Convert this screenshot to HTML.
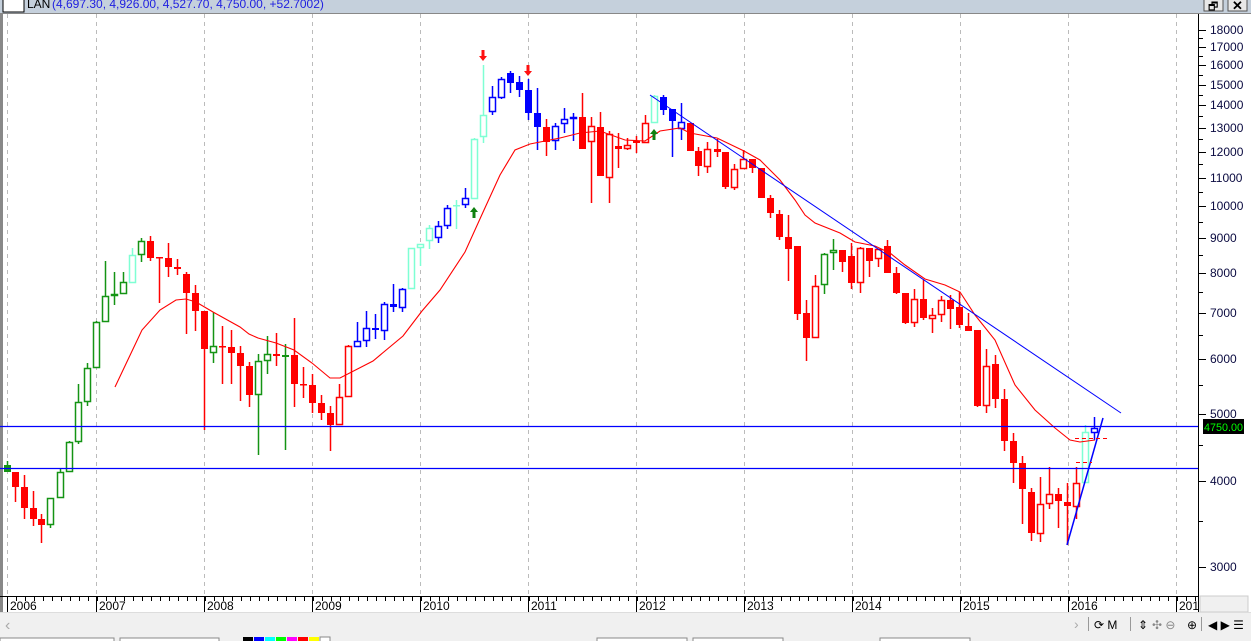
<!DOCTYPE html>
<html><head><meta charset="utf-8"><style>
html,body{margin:0;padding:0;width:1251px;height:641px;overflow:hidden;background:#fff;font-family:"Liberation Sans",sans-serif}
svg{display:block}
</style></head><body>
<svg id="s" width="1251" height="641" xmlns="http://www.w3.org/2000/svg" font-family="Liberation Sans, sans-serif">
<rect x="0" y="0" width="1251" height="641" fill="#fff"/>
<rect x="0" y="0" width="1251" height="13" fill="#c5d0dc"/>
<line x1="0" y1="13.5" x2="1251" y2="13.5" stroke="#888"/>
<rect x="3" y="-4" width="21" height="16" fill="#fff" stroke="#000"/>
<text x="27" y="8" font-size="12" fill="#000">LAN</text>
<text x="52" y="8" font-size="12" fill="#2020e0">(4,697.30, 4,926.00, 4,527.70, 4,750.00, +52.7002)</text>
<rect x="1204" y="-3" width="19" height="14" fill="#e8e8e8" stroke="#555"/>
<text x="1208" y="10" font-size="11" fill="#000">🗗</text>
<rect x="1228" y="-3" width="19" height="14" fill="#e8e8e8" stroke="#555"/>
<text x="1232" y="10" font-size="13" font-weight="bold" fill="#000">✕</text>
<rect x="0" y="14" width="3" height="600" fill="#888"/>
<g id="g"></g>
<rect x="1198" y="14" width="53" height="598" fill="#fff"/>
<line x1="1198.5" y1="14" x2="1198.5" y2="612" stroke="#000"/>
<g id="ax"></g>
<rect x="1203" y="419" width="41" height="15" fill="#000"/>
<text x="1204" y="431" font-size="11" fill="#00ff00" textLength="39" lengthAdjust="spacingAndGlyphs">4750.00</text>
<line x1="0" y1="596.5" x2="1198" y2="596.5" stroke="#000"/>
<g id="dx"></g>
<rect x="1200" y="596" width="48" height="16" fill="#f0f0f0" stroke="#ccc"/>
<rect x="0" y="613" width="1251" height="28" fill="#f0f0f0"/>
<line x1="0" y1="612.5" x2="1251" y2="612.5" stroke="#ddd"/>
<text x="5" y="630" font-size="16" fill="#aaa">‹</text>
<text x="1074" y="629" font-size="14" fill="#aaa">›</text>
<text x="1094" y="629" font-size="12" fill="#000">⟳  M</text>
<text x="1138" y="629" font-size="12" fill="#000">⇕</text>
<text x="1152" y="629" font-size="12" fill="#888">✣ ⊖</text>
<text x="1187" y="629" font-size="12" fill="#000">⊕</text>
<text x="1208" y="629" font-size="12" fill="#000">◀ ▶ ☰</text>
<line x1="1088.5" y1="617" x2="1088.5" y2="631" stroke="#999"/>
<line x1="1130.5" y1="617" x2="1130.5" y2="631" stroke="#999"/>
<line x1="1201.5" y1="617" x2="1201.5" y2="631" stroke="#999"/>
<rect x="0" y="638" width="114" height="5" fill="#fff" stroke="#888"/>
<rect x="120" y="638" width="99" height="5" fill="#fff" stroke="#888"/>
<rect x="243" y="637" width="10" height="5" fill="#000"/><rect x="254" y="637" width="10" height="5" fill="#00f"/><rect x="265" y="637" width="10" height="5" fill="#0ff"/><rect x="276" y="637" width="10" height="5" fill="#0f0"/><rect x="287" y="637" width="10" height="5" fill="#f0f"/><rect x="298" y="637" width="10" height="5" fill="#f00"/><rect x="309" y="637" width="10" height="5" fill="#ff0"/><rect x="320" y="637" width="10" height="5" fill="#fff" stroke="#888"/>
<rect x="597" y="638" width="90" height="5" fill="#fff" stroke="#888"/>
<rect x="693" y="638" width="90" height="5" fill="#fff" stroke="#888"/>
<rect x="880" y="638" width="90" height="5" fill="#fff" stroke="#888"/>
</svg>
<script>
var NS="http://www.w3.org/2000/svg",g=document.getElementById("g");
function el(t,a,p){var e=document.createElementNS(NS,t);for(var k in a)e.setAttribute(k,a[k]);(p||g).appendChild(e);return e;}
[7,96,204,312,420,528,636,744,852,960,1068,1176].forEach(function(x){el("line",{x1:x+.5,y1:14,x2:x+.5,y2:596,stroke:"#bbb","stroke-dasharray":"4,4"});});
var C={r:"#ff0000",g:"#149414",b:"#0000ff",a:"#7fffd4"};
var d=[
[7,465,472,461,472,'g',1],[15,472,487,472,502,'r',1],[24,487,508,475,519,'r',1],[33,508,519,491,526,'r',1],[41,519,525,514,543,'r',1],
[50,498,525,498,528,'g',0],[60,472,498,468,498,'g',0],[69,442,472,441,472,'g',0],[78,402,442,384,444,'g',0],[87,368,402,363,406,'g',0],
[96,322,368,321,368,'g',0],[105,296,322,261,322,'g',0],[114,294,296,272,305,'g',0],[123,282,294,272,294,'g',0],[132,255,283,248,283,'a',0],
[141,241,255,238,262,'g',0],[150,241,258,236,261,'r',1],[159,257,258,257,303,'r',1],[168,258,267,243,277,'r',1],[177,267,269,259,275,'r',1],
[186,274,293,272,334,'r',1],[195,293,311,285,331,'r',1],[204,311,349,311,430,'r',1],[213,346,353,312,363,'g',0],[222,346,347,326,384,'r',1],
[231,347,353,330,384,'r',1],[240,353,366,346,401,'r',1],[249,366,395,362,407,'r',1],[258,361,395,354,455,'g',0],[267,354,361,336,374,'g',0],
[276,354,356,333,366,'r',1],[285,355,357,344,450,'g',1],[294,355,384,318,407,'r',1],[303,384,385,367,398,'r',1],[312,385,403,374,413,'r',1],
[321,403,413,395,420,'r',1],[330,413,425,406,451,'r',1],[339,397,425,384,425,'r',0],[348,346,397,345,397,'r',0],[357,341,347,322,347,'b',0],
[366,328,341,311,347,'b',0],[375,328,330,314,339,'b',1],[384,304,331,302,340,'b',0],[393,304,307,284,312,'b',1],[402,289,308,288,312,'b',0],
[411,248,289,248,289,'a',0],[420,244,248,244,266,'a',0],[429,228,241,225,249,'a',0],[438,226,238,221,243,'b',0],[447,208,226,205,229,'b',0],
[456,205,206,200,229,'a',1],[465,198,205,188,208,'b',0],[474,139,199,138,199,'a',0],[483,115,137,65,143,'a',0],[492,97,112,86,115,'b',0],
[501,79,98,77,99,'b',0],[510,73,83,71,93,'b',1],[519,82,90,76,97,'b',1],[528,90,113,79,120,'b',1],[537,113,127,88,150,'b',1],
[546,127,142,119,156,'r',1],[555,126,141,123,150,'b',0],[564,119,124,108,133,'b',0],[573,117,119,113,141,'b',0],[582,117,149,93,149,'r',1],
[591,126,142,117,203,'r',0],[600,127,176,112,176,'r',1],[609,134,178,131,203,'r',0],[618,146,149,133,168,'r',1],[627,145,149,138,150,'r',0],
[636,141,143,136,153,'r',1],[645,123,143,115,143,'r',0],[654,96,123,95,123,'a',0],[663,97,110,95,115,'b',1],[672,109,121,109,157,'b',1],
[681,122,129,103,140,'b',0],[690,123,151,123,151,'r',1],[698,151,166,147,176,'r',1],[707,149,167,142,173,'r',0],[717,149,152,139,157,'r',1],
[725,152,187,152,189,'r',1],[734,169,188,164,190,'r',0],[743,159,169,150,169,'r',0],[752,159,168,159,173,'r',1],[761,168,198,168,198,'r',1],
[770,198,213,195,218,'r',1],[779,214,237,210,240,'r',1],[788,237,249,215,281,'r',1],[797,246,314,246,320,'r',1],[806,313,338,300,361,'r',1],
[815,286,338,275,338,'r',0],[824,254,285,253,294,'g',0],[833,250,253,239,270,'g',0],[842,250,262,250,272,'r',1],[851,256,283,243,289,'r',1],
[860,248,283,247,293,'r',0],[869,248,261,248,277,'r',1],[878,249,259,249,267,'r',0],[887,246,273,240,273,'r',1],[896,273,293,267,294,'r',1],
[905,293,323,293,324,'r',1],[914,299,323,289,327,'r',0],[923,299,318,280,320,'r',1],[932,315,319,308,333,'r',0],[941,300,315,296,322,'r',0],
[950,300,309,295,329,'r',1],[959,307,325,292,328,'r',1],[968,326,331,313,331,'r',1],[977,330,406,330,407,'r',1],[986,366,406,349,413,'r',0],
[995,364,399,355,408,'r',1],[1004,399,441,389,451,'r',1],[1013,441,463,433,483,'r',1],[1022,463,489,456,524,'r',1],[1031,492,533,488,541,'r',1],
[1040,504,534,477,542,'r',0],[1049,494,504,467,509,'r',0],[1058,494,501,488,528,'r',1],[1067,502,506,483,545,'r',1],[1076,483,507,467,519,'r',0],
[1085,432,483,425,483,'a',0],[1094,428,433,417,440,'b',0]];
d.forEach(function(c){var col=C[c[5]];
el("line",{x1:c[0]+.5,y1:c[3],x2:c[0]+.5,y2:c[4],stroke:col,"stroke-width":1.5});
var h=Math.max(c[2]-c[1],1.5);
if(c[6])el("rect",{x:c[0]-3,y:c[1],width:7,height:h,fill:col});
else el("rect",{x:c[0]-2.5,y:c[1]+.5,width:6,height:Math.max(h-1,1),fill:"#fff",stroke:col,"stroke-width":1.5});
});
var ma=[[115,387],[142,330],[160,310],[176,300],[186,299],[196,302],[213,312],[240,327],[249,334],[258,338],[276,343],[294,350],[312,363],[330,378],[340,378],[373,361],[403,336],[422,311],[440,290],[465,252],[484,210],[500,175],[515,150],[530,144],[560,138],[580,133],[600,131],[625,140],[645,141],[660,131],[680,128],[690,133],[717,138],[744,151],[760,160],[780,180],[795,200],[805,215],[815,223],[840,233],[855,242],[875,246],[890,253],[905,265],[925,279],[945,285],[960,292],[975,315],[995,340],[1015,385],[1035,410],[1055,428],[1070,440],[1080,442],[1095,440]];
el("polyline",{points:ma.map(function(p){return p.join(",")}).join(" "),fill:"none",stroke:"#ff0000","stroke-width":1.1});
el("line",{x1:0,y1:426.5,x2:1198,y2:426.5,stroke:"#0000ff","stroke-width":1.3});
el("line",{x1:0,y1:468.5,x2:1198,y2:468.5,stroke:"#0000ff","stroke-width":1.3});
el("line",{x1:650,y1:95,x2:1121,y2:413,stroke:"#0000ff","stroke-width":1});
el("line",{x1:1067,y1:545,x2:1103,y2:418,stroke:"#0000ff","stroke-width":1.5});
el("line",{x1:1075,y1:438.5,x2:1110,y2:438.5,stroke:"#ff0000","stroke-dasharray":"4,3"});
el("line",{x1:1076,y1:462.5,x2:1092,y2:462.5,stroke:"#ff0000","stroke-dasharray":"4,3"});
function arrow(x,y,up,col){var p=up?[[x,y],[x-4,y+5],[x-1.5,y+5],[x-1.5,y+11],[x+1.5,y+11],[x+1.5,y+5],[x+4,y+5]]:[[x,y+11],[x-4,y+6],[x-1.5,y+6],[x-1.5,y],[x+1.5,y],[x+1.5,y+6],[x+4,y+6]];
el("polygon",{points:p.map(function(q){return q.join(",")}).join(" "),fill:col});}
arrow(483,50,0,"#ff1010");arrow(528,65,0,"#ff1010");arrow(474,207,1,"#108010");arrow(654,129,1,"#108010");
var ax=document.getElementById("ax");
function Y(p){return 30+299.7*Math.log(18000/p);}
var labs=[18000,17000,16000,15000,14000,13000,12000,11000,10000,9000,8000,7000,6000,5000,4000,3000];
labs.forEach(function(p){var y=Math.round(Y(p));
el("line",{x1:1198,y1:y+.5,x2:1206,y2:y+.5,stroke:"#000"},ax);
var t=el("text",{x:1210,y:y+4,"font-size":12,fill:"#0a0a40"},ax);t.textContent=String(p);});
for(var p=3000;p<18000;p+=500){if(p%1000){var y=Math.round(Y(p));el("line",{x1:1198,y1:y+.5,x2:1203,y2:y+.5,stroke:"#000"},ax);}}
var dx=document.getElementById("dx");
var yrs=[[7,"2006"],[96,"2007"],[204,"2008"],[312,"2009"],[420,"2010"],[528,"2011"],[636,"2012"],[744,"2013"],[852,"2014"],[960,"2015"],[1068,"2016"],[1176,"201"]];
yrs.forEach(function(a){el("line",{x1:a[0]+.5,y1:596,x2:a[0]+.5,y2:612,stroke:"#000"},dx);
var t=el("text",{x:a[0]+3,y:610,"font-size":12,fill:"#000"},dx);t.textContent=a[1];});
for(var x=7;x<1198;x+=9){el("line",{x1:x+.5,y1:596,x2:x+.5,y2:601,stroke:"#000"},dx);}
</script>
</body></html>
